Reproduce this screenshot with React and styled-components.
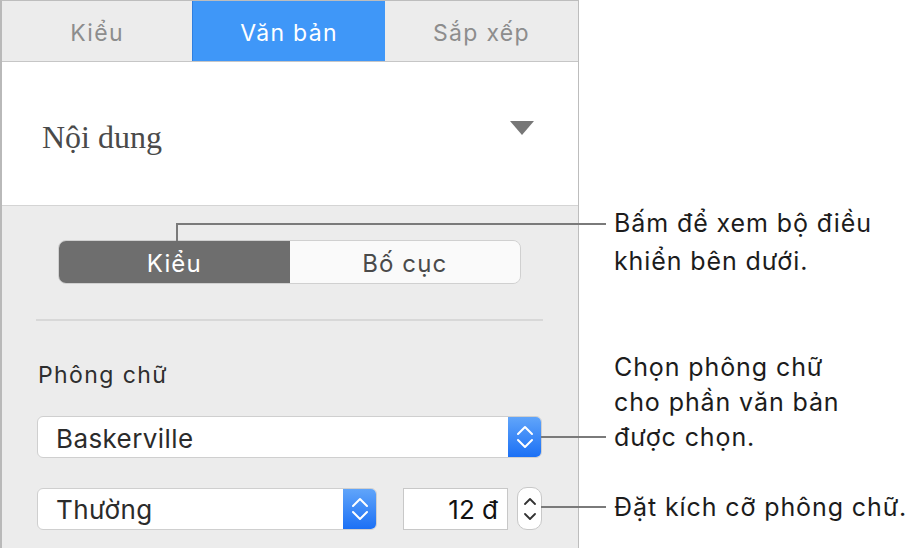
import styled, { createGlobalStyle } from "styled-components";

const GlobalStyle = createGlobalStyle`
  html, body {
    margin: 0;
    padding: 0;
    background: #fff;
  }
  body {
    font-family: "Inter", "Liberation Sans", sans-serif;
    width: 915px;
    height: 548px;
    overflow: hidden;
  }
`;

const Page = styled.div`
  position: relative;
  display: flex;
  width: 915px;
  height: 548px;
`;

const Panel = styled.div`
  width: 576px;
  height: 547px;
  border-top: 1px solid #bdbdbd;
  border-left: 2px solid #b9b9b9;
  border-right: 1px solid #bdbdbd;
  background: #ececec;
  display: flex;
  flex-direction: column;
`;

const Tabs = styled.div`
  display: grid;
  grid-template-columns: 190px 193px 1fr;
  height: 60px;
  border-bottom: 1px solid #c6c6c6;
`;

const Tab = styled.div`
  display: flex;
  align-items: center;
  justify-content: center;
  padding-top: 3px;
  font-size: 23px;
  letter-spacing: 1.3px;
  color: ${(p) => (p.$active ? "#fff" : "#8d8d8d")};
  background: ${(p) => (p.$active ? "#3f97f8" : "#ececec")};
  border-left: ${(p) => (p.$active ? "1px solid #2f7fe0" : "none")};
`;

const Header = styled.div`
  height: 143px;
  background: #fff;
  border-bottom: 1px solid #d4d4d4;
  display: flex;
  align-items: center;
  justify-content: space-between;
  padding: 0 44px 0 40px;
`;

const HeaderTitle = styled.div`
  font-family: "Liberation Serif", "DejaVu Serif", serif;
  font-size: 32px;
  color: #4a4a4a;
  margin-top: 8px;
`;

const Triangle = styled.div`
  width: 0;
  height: 0;
  border-left: 12px solid transparent;
  border-right: 12px solid transparent;
  border-top: 14px solid #777;
  margin-top: -12px;
`;

const Body = styled.div`
  padding: 34px 35px 0 34px;
  display: flex;
  flex-direction: column;
`;

const Segmented = styled.div`
  display: flex;
  margin: 0 22px 0 22px;
  height: 44px;
  border-radius: 8px;
  overflow: hidden;
  border: 1px solid #d0d0d0;
  box-sizing: border-box;
`;

const Segment = styled.div`
  flex: 1;
  display: flex;
  align-items: center;
  justify-content: center;
  padding-top: 2px;
  font-size: 24px;
  letter-spacing: 1.1px;
  color: ${(p) => (p.$active ? "#fff" : "#4a4a4a")};
  background: ${(p) => (p.$active ? "#6e6e6e" : "#fafafa")};
`;

const Divider = styled.div`
  height: 2px;
  background: #d8d8d8;
  margin: 35px 0 0 0;
`;

const Label = styled.div`
  font-size: 23px;
  letter-spacing: 1.4px;
  color: #2e2e2e;
  margin-top: 40px;
  margin-left: 2px;
`;

const Row = styled.div`
  display: flex;
  align-items: center;
  margin-top: ${(p) => p.$top}px;
  margin-left: 1px;
`;

const Select = styled.div`
  width: ${(p) => p.$width}px;
  height: 42px;
  box-sizing: border-box;
  border: 1px solid #cfcfcf;
  border-radius: 6px;
  background: #fff;
  display: flex;
  align-items: stretch;
  overflow: hidden;
`;

const SelectText = styled.div`
  flex: 1;
  display: flex;
  align-items: center;
  padding: 2px 0 0 18px;
  font-size: 26px;
  letter-spacing: 0.4px;
  color: #2b2b2b;
`;

const SelectArrows = styled.div`
  width: 34px;
  background: linear-gradient(#62a6fa, #1a6ff5);
  display: flex;
  align-items: center;
  justify-content: center;
  margin: -1px -1px -1px 0;
`;

const SizeField = styled.div`
  width: 105px;
  height: 42px;
  box-sizing: border-box;
  margin-left: 26px;
  border: 1px solid #c8c8c8;
  background: #fff;
  display: flex;
  align-items: center;
  justify-content: flex-end;
  padding: 2px 9px 0 0;
  font-size: 26px;
  color: #111;
`;

const Stepper = styled.div`
  width: 25px;
  height: 43px;
  box-sizing: border-box;
  margin-left: 9px;
  border: 1px solid #c8c8c8;
  border-radius: 10px;
  background: #fff;
  display: flex;
  align-items: center;
  justify-content: center;
`;

const Notes = styled.div`
  display: flex;
  flex-direction: column;
  margin-left: 35px;
`;

const Note = styled.div`
  font-size: 25px;
  letter-spacing: 0.9px;
  line-height: ${(p) => p.$lh}px;
  color: #1c1c1c;
  margin-top: ${(p) => p.$top}px;
  white-space: nowrap;
`;

const Line = styled.div`
  position: absolute;
  background: #7a7a7a;
  left: ${(p) => p.$x}px;
  top: ${(p) => p.$y}px;
  width: ${(p) => p.$w}px;
  height: ${(p) => p.$h}px;
`;

function Chevrons({ color, size = 12, gap = 5, weight = 2 }) {
  const w = size;
  const h = size / 2;
  return (
    <svg width={w + 2} height={h * 2 + gap + 4} viewBox={`-1 -2 ${w + 2} ${h * 2 + gap + 4}`}>
      <polyline
        points={`0,${h} ${w / 2},0 ${w},${h}`}
        fill="none"
        stroke={color}
        strokeWidth={weight}
        strokeLinecap="round"
        strokeLinejoin="round"
      />
      <polyline
        points={`0,${h + gap} ${w / 2},${h * 2 + gap} ${w},${h + gap}`}
        fill="none"
        stroke={color}
        strokeWidth={weight}
        strokeLinecap="round"
        strokeLinejoin="round"
      />
    </svg>
  );
}

export default function App() {
  return (
    <Page>
      <GlobalStyle />
      <Panel>
        <Tabs>
          <Tab>Kiểu</Tab>
          <Tab $active>Văn bản</Tab>
          <Tab>Sắp xếp</Tab>
        </Tabs>
        <Header>
          <HeaderTitle>Nội dung</HeaderTitle>
          <Triangle />
        </Header>
        <Body>
          <Segmented>
            <Segment $active>Kiểu</Segment>
            <Segment>Bố cục</Segment>
          </Segmented>
          <Divider />
          <Label>Phông chữ</Label>
          <Row $top={27}>
            <Select $width={505}>
              <SelectText>Baskerville</SelectText>
              <SelectArrows>
                <Chevrons color="#fff" size={14} gap={6} />
              </SelectArrows>
            </Select>
          </Row>
          <Row $top={29}>
            <Select $width={340}>
              <SelectText>Thường</SelectText>
              <SelectArrows>
                <Chevrons color="#fff" size={14} gap={6} />
              </SelectArrows>
            </Select>
            <SizeField>12 đ</SizeField>
            <Stepper>
              <Chevrons color="#333" size={10} gap={10} weight={1.8} />
            </Stepper>
          </Row>
        </Body>
      </Panel>
      <Notes>
        <Note $top={204} $lh={38}>
          Bấm để xem bộ điều
          <br />
          khiển bên dưới.
        </Note>
        <Note $top={70} $lh={35}>
          Chọn phông chữ
          <br />
          cho phần văn bản
          <br />
          được chọn.
        </Note>
        <Note $top={34} $lh={36}>
          Đặt kích cỡ phông chữ.
        </Note>
      </Notes>
      <Line $x={176} $y={223} $w={430} $h={2} />
      <Line $x={176} $y={223} $w={2} $h={18} />
      <Line $x={541} $y={436} $w={65} $h={2} />
      <Line $x={541} $y={506} $w={65} $h={2} />
    </Page>
  );
}
